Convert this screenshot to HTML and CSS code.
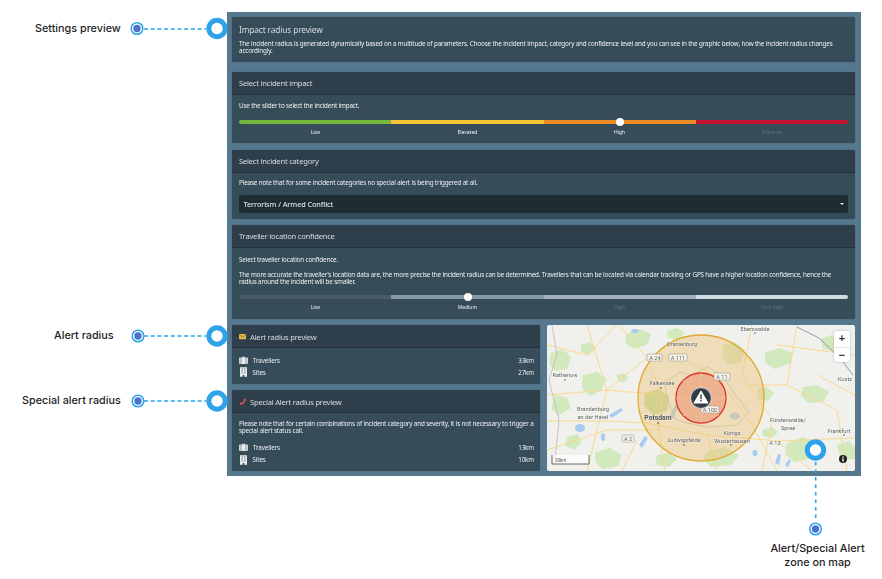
FILE: index.html
```html
<!DOCTYPE html>
<html lang="en">
<head>
<meta charset="utf-8">
<title>Impact radius preview</title>
<link rel="stylesheet" href="styles.css">
</head>
<body>
<main class="panel">
  <section class="card intro">
    <h2 class="intro-title">Impact radius preview</h2>
    <p class="copy">The incident radius is generated dynamically based on a multitude of parameters. Choose the incident impact, category and confidence level and you can see in the graphic below, how the incident radius changes accordingly.</p>
  </section>

  <section class="card impact">
    <h3 class="head">Select incident impact</h3>
    <div class="body">
      <p class="copy">Use the slider to select the incident impact.</p>
      <div class="slider">
        <span class="seg green"></span><span class="seg yellow"></span><span class="seg orange"></span><span class="seg red"></span>
        <span class="thumb thumb-high"></span>
      </div>
      <div class="ticks"><span>Low</span><span>Elevated</span><span>High</span><span class="off">Extreme</span></div>
    </div>
  </section>

  <section class="card category">
    <h3 class="head">Select incident category</h3>
    <div class="body">
      <p class="copy">Please note that for some incident categories no special alert is being triggered at all.</p>
      <div class="select"><span>Terrorism / Armed Conflict</span><i class="caret"></i></div>
    </div>
  </section>

  <section class="card confidence">
    <h3 class="head">Traveller location confidence</h3>
    <div class="body">
      <p class="copy">Select traveller location confidence.</p>
      <p class="copy gap">The more accurate the traveller's location data are, the more precise the incident radius can be determined. Travellers that can be located via calendar tracking or GPS have a higher location confidence, hence the radius around the incident will be smaller.</p>
      <div class="slider conf">
        <span class="seg c1"></span><span class="seg c2"></span><span class="seg c3"></span><span class="seg c4"></span>
        <span class="thumb thumb-med"></span>
      </div>
      <div class="ticks"><span>Low</span><span>Medium</span><span class="off">High</span><span class="off">Very high</span></div>
    </div>
  </section>

  <div class="split">
    <div class="stack">
      <section class="card alert">
        <h3 class="head with-icon">
          <svg class="hicon" viewBox="0 0 12 10"><rect x="0" y="0.5" width="12" height="9" rx="1" fill="#e8b93f"/><path d="M0.5 2 L6 6 L11.5 2" fill="none" stroke="#34495a" stroke-width="0.9"/></svg>
          Alert radius preview
        </h3>
        <div class="body rows">
          <div class="row">
            <svg class="ricon" viewBox="0 0 12 11"><path class="w" d="M4 2V1h4v1h3a1 1 0 0 1 1 1v7a1 1 0 0 1-1 1H1a1 1 0 0 1-1-1V3a1 1 0 0 1 1-1zM5 1.800h2V1.400H5z"/><path d="M2.500 2v9M9.500 2v9" stroke="#34495a" stroke-width=".7"/></svg>
            <span class="rlabel">Travellers</span><span class="val">33km</span>
          </div>
          <div class="row">
            <svg class="ricon tower" viewBox="0 0 9 12"><path class="w" d="M0 0h9v12H5.500V10h-2v2H0z"/><path d="M2 2h1.500M5.500 2H7M2 4.500h1.500M5.500 4.500H7M2 7h1.500M5.500 7H7" stroke="#34495a" stroke-width="1"/></svg>
            <span class="rlabel">Sites</span><span class="val">27km</span>
          </div>
        </div>
      </section>
      <section class="card special">
        <h3 class="head with-icon">
          <svg class="hicon" viewBox="0 0 12 12"><path d="M9.500 0.500 L11.500 2 C11.500 7 7 11.500 2 11.500 L0.500 9.500 L3 7.500 L4.300 8.500 C6 7.800 7.800 6 8.500 4.300 L7.500 3 Z" fill="#d9525e"/></svg>
          Special Alert radius preview
        </h3>
        <div class="body rows">
          <p class="copy note">Please note that for certain combinations of incident category and severity, it is not necessary to trigger a special alert status call.</p>
          <div class="row">
            <svg class="ricon" viewBox="0 0 12 11"><path class="w" d="M4 2V1h4v1h3a1 1 0 0 1 1 1v7a1 1 0 0 1-1 1H1a1 1 0 0 1-1-1V3a1 1 0 0 1 1-1zM5 1.800h2V1.400H5z"/><path d="M2.500 2v9M9.500 2v9" stroke="#34495a" stroke-width=".7"/></svg>
            <span class="rlabel">Travellers</span><span class="val">13km</span>
          </div>
          <div class="row">
            <svg class="ricon tower" viewBox="0 0 9 12"><path class="w" d="M0 0h9v12H5.500V10h-2v2H0z"/><path d="M2 2h1.500M5.500 2H7M2 4.500h1.500M5.500 4.500H7M2 7h1.500M5.500 7H7" stroke="#34495a" stroke-width="1"/></svg>
            <span class="rlabel">Sites</span><span class="val">10km</span>
          </div>
        </div>
      </section>
    </div>

    <div class="map">
      <svg class="map-art" viewBox="0 0 308 146">
        <rect width="308" height="146" fill="#f0f0ec"/>
        <g fill="#d2e8bd">
          <path d="M4 28l12-4 8 8-4 12-12 2-6-8z"/><path d="M36 50l14-3 10 7-6 11-10 6-9-8z"/><path d="M8 70l12 3 4 10-12 7-8-6z"/>
          <path d="M78 10l14-6 12 5-3 10-14 5-8-5z"/><path d="M48 128l14-5 12 6-2 12-16 3-8-7z"/><path d="M20 112l10-3 5 8-8 8-9-5z"/>
          <path d="M176 20l12-3 10 8-4 12-12 3-7-8z"/><path d="M218 28l14-5 14 5-2 10-16 6-10-6z"/><path d="M256 62l14-2 12 7-6 10-15 1-7-7z"/>
          <path d="M210 64l10-2 7 6-6 8-10-2z"/><path d="M160 126l18-4 14 8-8 10-20 2-8-8z"/><path d="M240 118l16-6 16 7-6 14-18 4-10-8z"/>
          <path d="M274 14l10-4 8 6-6 10-10-2z"/><path d="M110 130l12-2 8 6-8 8-14-2z"/><path d="M120 6l10-3 8 5-7 7-10-2z"/>
          <path d="M34 20l9-3 6 6-7 7-8-3z"/><path d="M70 50l7-2 5 5-6 5-6-3z"/><path d="M290 120l12-4 6 6v12l-14 0z"/><path d="M215 105l10-3 6 5-6 6-9-2z"/>
        </g>
        <path d="M98 68l14-4 10 8-2 14-14 4-9-10z" fill="#bfdc9e"/>
        <g fill="#a8cbee">
          <ellipse cx="33" cy="103" rx="5" ry="4"/><path d="M62 90l12-7 2 2-11 8z"/><path d="M122 92l6-12 3 1-5 13z"/>
          <path d="M92 120l6-9 3 2-6 10z"/><ellipse cx="188" cy="91" rx="5" ry="3.500"/><ellipse cx="208" cy="128" rx="2.500" ry="3"/>
          <path d="M228 138l3-9 3 1-2 10zM238 140l4-6 2 1-3 7z"/><ellipse cx="88" cy="6" rx="4" ry="2"/><ellipse cx="56" cy="112" rx="2" ry="4"/>
        </g>
        <g fill="none" stroke="#f9da90" stroke-width="1">
          <path d="M0 96 H60 L100 98 L160 110 L230 116 L308 113"/><path d="M100 33 L135 33 L170 52 L205 100 L230 146"/><path d="M72 0 L100 33 L115 70 L112 105 L118 146"/>
          <path d="M0 70 L60 65 L115 70"/><path d="M205 0 L195 50 L225 95 L215 146"/><path d="M230 20 L308 30"/><path d="M40 0 L60 65 L40 146"/><path d="M240 60 L290 85 L300 146"/><path d="M160 110 L170 146"/>
          <path d="M0 20 L40 30 L70 0"/><path d="M250 0 L240 60 L200 60"/><path d="M0 125 L60 105 L112 105"/><path d="M230 116 L265 146"/><path d="M60 65 L100 33"/><path d="M270 50 L308 70"/><path d="M75 146 L90 115"/>
        </g>
        <g fill="none" stroke="#aeb6b8" stroke-width=".7">
          <path d="M133 47 L117 58 L120 72 L128 94 L140 98 L160 102 L190 100 L202 88 L185 65 L175 50 L160 42 L145 50 Z"/>
          <path d="M5 0 L10 30 L2 55 L12 95 L8 135"/>
        </g>
        <path d="M250 2 L272 13 L292 32 L306 50" fill="none" stroke="#8f9cae" stroke-width="1"/>
        <circle cx="154" cy="73" r="63" fill="#eec47c" fill-opacity=".46" stroke="#e0a92d" stroke-width="1.300"/>
        <circle cx="154" cy="73" r="25" fill="#ec8f6f" fill-opacity=".55" stroke="#dc3232" stroke-width="1.300"/>
        <g fill="none" stroke="#f3c08c" stroke-width=".8"><path d="M154 48V98M129 73H179M136 55L172 91M172 55L136 91"/></g>
        <g class="shield"><rect x="100" y="29" width="15" height="7" rx="1"/><rect x="122" y="29" width="18" height="7" rx="1"/><rect x="167" y="48" width="16" height="7" rx="1"/><rect x="154" y="81" width="18" height="7" rx="1"/><rect x="75" y="110" width="12" height="7" rx="1"/></g>
        <g class="maptext">
          <text x="108" y="34.700">A 24</text><text x="131" y="34.700">A 111</text><text x="175" y="53.700">A 11</text><text x="163" y="86.700">A 100</text><text x="81" y="115.700">A 2</text><text x="228" y="120">A 13</text>
          <text x="135" y="21">Oranienburg</text><text x="18" y="52">Rathenow</text><text x="115" y="60">Falkensee</text><text x="298" y="56">Kostz</text>
          <text x="46" y="86">Brandenburg</text><text x="46" y="94">an der Havel</text><text class="big" x="111" y="95">Potsdam</text>
          <text x="241" y="97">Fürstenwalde/</text><text x="241" y="105">Spree</text><text x="292" y="108">Frankfurt</text>
          <text x="185" y="110">Königs</text><text x="185" y="118">Wusterhausen</text><text x="137" y="117">Ludwigsfelde</text><text x="208" y="5.500">Eberswalde</text>
        </g>
        <g fill="#333"><circle cx="114" cy="63" r=".7"/><circle cx="111" cy="98" r=".8"/><circle cx="137" cy="120" r=".7"/><circle cx="184" cy="120" r=".7"/><circle cx="18" cy="55" r=".7"/><circle cx="208" cy="8" r=".7"/><circle cx="297" cy="110" r=".7"/></g>
        <circle cx="154" cy="73" r="10.500" fill="#3d4a50" stroke="#d6d8d8" stroke-width="1"/>
        <circle cx="154" cy="73" r="8.500" fill="#2f3a42"/>
        <path d="M154 66 L161 78 H147 Z" fill="#fff" stroke="#fff" stroke-linejoin="round"/>
        <rect x="153.300" y="69.500" width="1.400" height="4.700" fill="#2f3a42"/><rect x="153.300" y="75" width="1.400" height="1.400" fill="#2f3a42"/>
        <path d="M5 130 V139 H42 V130" fill="#ffffffb0" stroke="#444" stroke-width=".8"/>
        <text class="scale" x="8" y="136.500">20km</text>
        <circle cx="296" cy="134" r="4" fill="#222"/><rect x="295.300" y="133.500" width="1.400" height="3" fill="#fff"/><rect x="295.300" y="131.500" width="1.400" height="1.300" fill="#fff"/>
      </svg>
      <div class="zoom"><span>+</span><span>−</span></div>
    </div>
  </div>
</main>

<svg class="notes" viewBox="0 0 882 579">
  <g class="leader">
    <path d="M144 29 H206"/><path d="M144 336 H206"/><path d="M144 401 H206"/><path class="vert" d="M815.700 462 V521"/>
  </g>
  <g class="big-ring"><circle cx="217" cy="28.500" r="8.200"/><circle cx="217" cy="336" r="8.200"/><circle cx="217" cy="401" r="8.200"/><circle cx="815.500" cy="450" r="8.200"/></g>
  <g class="small-ring"><circle cx="137" cy="28.500" r="5.800"/><circle cx="138" cy="336" r="5.800"/><circle cx="138" cy="401" r="5.800"/><circle cx="815.500" cy="529" r="5.800"/></g>
  <g class="small-dot"><circle cx="137" cy="28.500" r="3.700"/><circle cx="138" cy="336" r="3.700"/><circle cx="138" cy="401" r="3.700"/><circle cx="815.500" cy="529" r="3.700"/></g>
  <g class="label">
    <text x="35" y="31.500">Settings preview</text>
    <text x="54" y="339">Alert radius</text>
    <text x="22" y="404">Special alert radius</text>
    <text class="mid" x="817.500" y="552">Alert/Special Alert</text>
    <text class="mid" x="817.500" y="566">zone on map</text>
  </g>
</svg>
</body>
</html>
```

FILE: styles.css
```css
* { box-sizing: border-box; }
html, body { margin: 0; padding: 0; background: #fff; }
body { position: relative; width: 882px; height: 579px; overflow: hidden; font-family: "Noto Sans", "Open Sans", sans-serif; color: #eef2f4; }

.panel {
  width: 634px; height: 464px; margin: 12px 0 0 227px;
  padding: 5px 6px 5px 5px; background: #56788f;
  display: flex; flex-direction: column;
  filter: blur(.25px);
}
.card { background: #364c59; border-radius: 2px; box-shadow: 0 0 1px #22323c; overflow: hidden; }
h2, h3, p { margin: 0; font-weight: 400; }
.intro { height: 45px; padding: 7px 7px; }
.intro-title { font-size: 8.300px; line-height: 11px; letter-spacing: -.12px; color: #d6dee2; }
.copy { font-size: 6.300px; line-height: 7.300px; letter-spacing: -.15px; color: #eef2f4; margin-top: 5px; }
.head { height: 23px; line-height: 22px; padding-left: 7px; font-size: 7.600px; letter-spacing: -.22px; color: #d6dee2; background: #2e3f4b; border-bottom: 1px solid #22323c; }
.with-icon { display: flex; align-items: center; gap: 4px; }
.hicon { width: 7px; height: 7px; flex: none; }
.body { padding: 7px 7px 0; }
.body > .copy:first-child { margin-top: 0; }
.impact { height: 71px; margin-top: 10px; }
.category { height: 69px; margin-top: 7px; }
.confidence { height: 94px; margin-top: 6px; }
.category .body { padding-top: 6px; }
.confidence .body { padding-top: 8px; }
.gap { margin-top: 7.500px; }

.slider { position: relative; display: flex; height: 4px; width: 609px; }
.impact .slider { margin-top: 11px; }
.conf { margin-top: 10px; }
.seg { flex: 1; height: 4px; }
.green { background: #75b83b; border-radius: 2px 0 0 2px; }
.yellow { background: #f6c334; }
.orange { background: #ea8a22; }
.red { background: #c5122f; border-radius: 0 2px 2px 0; }
.c1 { background: #4b5a69; border-radius: 2px 0 0 2px; }
.c2 { background: #8798a8; }
.c3 { background: #a4b1be; }
.c4 { background: #d1dae2; border-radius: 0 2px 2px 0; }
.thumb { position: absolute; top: -2px; width: 8px; height: 8px; border-radius: 50%; background: #fff; }
.thumb-high { left: 376.500px; }
.thumb-med { left: 224.500px; }
.ticks { display: grid; grid-template-columns: repeat(4, 152.250px); text-align: center; font-size: 5px; line-height: 7px; color: #eef2f4; margin-top: 5px; }
.off { color: #5f7585; }

.select { height: 18px; margin-top: 9px; padding: 0 4.500px; display: flex; align-items: center; justify-content: space-between; background: #1d2b33; border-radius: 2px; font-size: 7.300px; letter-spacing: -.1px; font-weight: 500; color: #dde3e7; }
.caret { width: 0; height: 0; border: 2.200px solid transparent; border-top: 2.500px solid #e6ebee; border-bottom: 0; }

.split { display: grid; grid-template-columns: 308px 308px; column-gap: 7px; margin-top: 6px; height: 146px; }
.stack { display: flex; flex-direction: column; gap: 6px; }
.alert { height: 59px; }
.special { height: 81px; }
.alert .head, .special .head { padding-top: 1px; }
.rows { padding: 6px 6px 0 7px; }
.note { margin: 0 0 6.500px; padding-top: 1px; }
.row { display: flex; align-items: center; height: 12.300px; font-size: 6.200px; letter-spacing: -.1px; color: #eef2f4; }
.ricon { width: 9px; height: 8px; flex: none; }
.ricon.tower { width: 7px; height: 10px; margin-right: 1px; margin-left: .500px; }
.ricon .w { fill: #e6ebee; }
.rlabel { margin-left: 5px; }
.val { margin-left: auto; }

.map { position: relative; border-radius: 2px; overflow: hidden; height: 146px; }
.map-art { display: block; width: 308px; height: 146px; }
.shield { fill: #f4f1e6; stroke: #a09a86; stroke-width: .6; }
.maptext { font-size: 5.600px; fill: #5c5f60; text-anchor: middle; font-family: "Roboto", "Noto Sans", sans-serif; paint-order: stroke; stroke: #ffffff90; stroke-width: .8px; }
.maptext .big { font-size: 6.800px; font-weight: 700; fill: #4f5254; }
.scale { font-size: 4.500px; fill: #555; font-family: "Roboto", sans-serif; }
.zoom { position: absolute; top: 6px; right: 5px; width: 16px; height: 31px; background: #fff; border-radius: 2px; box-shadow: 0 0 2px #0005; display: flex; flex-direction: column; font-family: "Liberation Sans", sans-serif; font-weight: 700; font-size: 11px; line-height: 15px; color: #333; text-align: center; }
.zoom span { height: 15.500px; }
.zoom span + span { border-top: 1px solid #e3e3e3; }

.notes { position: absolute; left: 0; top: 0; width: 882px; height: 579px; pointer-events: none; }
.leader path { fill: none; stroke: #22a7f0; stroke-width: 1.600; stroke-dasharray: 4 2.700; }
.leader .vert { stroke-dasharray: 3.500 4; }
.big-ring circle { fill: #fff; stroke: #2ea3ea; stroke-width: 5; }
.small-ring circle { fill: #fff; stroke: #2ea3ea; stroke-width: 1.500; }
.small-dot circle { fill: #4a73c9; }
.label text { font-family: "Inter", "Lato", sans-serif; font-size: 10.800px; font-weight: 500; fill: #1e1e1e; }
.label .mid { text-anchor: middle; }
```
